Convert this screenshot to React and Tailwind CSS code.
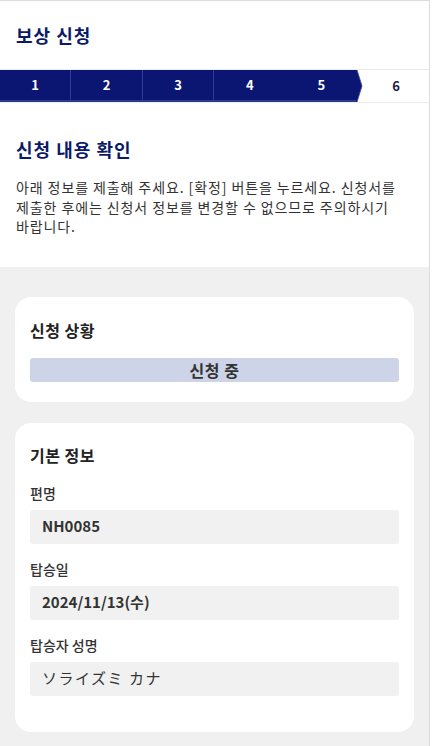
import React from "react";

const font = { fontFamily: '"Noto Sans CJK KR", "Noto Sans", sans-serif' };

function Field({ label, value, bold = true }) {
  return (
    <div className="flex flex-col">
      <div className="text-[14px] leading-[20px] font-medium text-[#333]">{label}</div>
      <div className="mt-[7px] h-[34px] rounded-[3px] bg-[#f1f1f1] px-3 flex items-center">
        <span className={`text-[15px] text-[#333] ${bold ? "font-bold" : "font-normal tracking-[1.5px]"}`}>{value}</span>
      </div>
    </div>
  );
}

export default function App() {
  const steps = ["1", "2", "3", "4", "5"];
  return (
    <div style={font} className="w-[432px] h-[746px] bg-white overflow-hidden">
      <div className="w-[430px] h-full border-t border-r border-[#dcdcdc] flex flex-col">
        <div className="h-[68px] px-4 flex items-center">
          <h1 className="text-[18px] font-bold text-[#0b1a66] tracking-[1px]">보상 신청</h1>
        </div>
        <div className="h-[34px] border-t border-b border-[#ececec] flex">
          <div className="flex bg-[#0a1672] border-b-2 border-[#2a3a8c]">
            {steps.map((s, i) => (
              <div
                key={s}
                className={`w-[71.4px] flex items-center justify-center text-white text-[13px] font-bold ${i < 3 ? "border-r border-[#2c3d93]" : ""}`}
              >
                {s}
              </div>
            ))}
          </div>
          <svg width="7" height="32" viewBox="0 0 7 32" className="-ml-px">
            <polygon points="0,0 1,0 6,16 1,32 0,32" fill="#0a1672" />
            <polyline points="1,0 6,16 1,32" fill="none" stroke="#3a4a9a" strokeWidth="0.8" />
          </svg>
          <div className="flex-1 flex items-center justify-center text-[13px] font-bold text-[#1a2050]">6</div>
        </div>

        <div className="px-4 pt-[33px] pb-[30px]">
          <h2 className="text-[18px] leading-[27px] font-bold text-[#0b1a66] tracking-[1px]">신청 내용 확인</h2>
          <p className="mt-[15px] text-[14px] leading-[19.5px] text-[#333] tracking-[0.9px] break-keep">
            아래 정보를 제출해 주세요. [확정] 버튼을 누르세요. 신청서를 제출한 후에는 신청서 정보를 변경할 수 없으므로 주의하시기 바랍니다.
          </p>
        </div>

        <div className="flex-1 bg-[#f0f0f0] px-[15px] pt-[30px] flex flex-col gap-[21px]">
          <div className="bg-white rounded-[16px] px-[15px] pt-[21px] pb-[20px]">
            <h3 className="text-[16px] leading-[24px] font-bold text-[#222] tracking-[0.5px]">신청 상황</h3>
            <div className="mt-[16px] h-[24px] rounded-[3px] bg-[#cdd4e7] flex items-center justify-center">
              <span className="text-[16px] font-bold text-[#333] tracking-[0.5px]">신청 중</span>
            </div>
          </div>

          <div className="bg-white rounded-[16px] px-[15px] pt-[20px] pb-[36px]">
            <h3 className="text-[16px] leading-[24px] font-bold text-[#222] tracking-[0.5px]">기본 정보</h3>
            <div className="mt-[16px] flex flex-col gap-[15px]">
              <Field label="편명" value="NH0085" />
              <Field label="탑승일" value="2024/11/13(수)" />
              <Field label="탑승자 성명" value="ソライズミ カナ" bold={false} />
            </div>
          </div>
        </div>
      </div>
    </div>
  );
}
